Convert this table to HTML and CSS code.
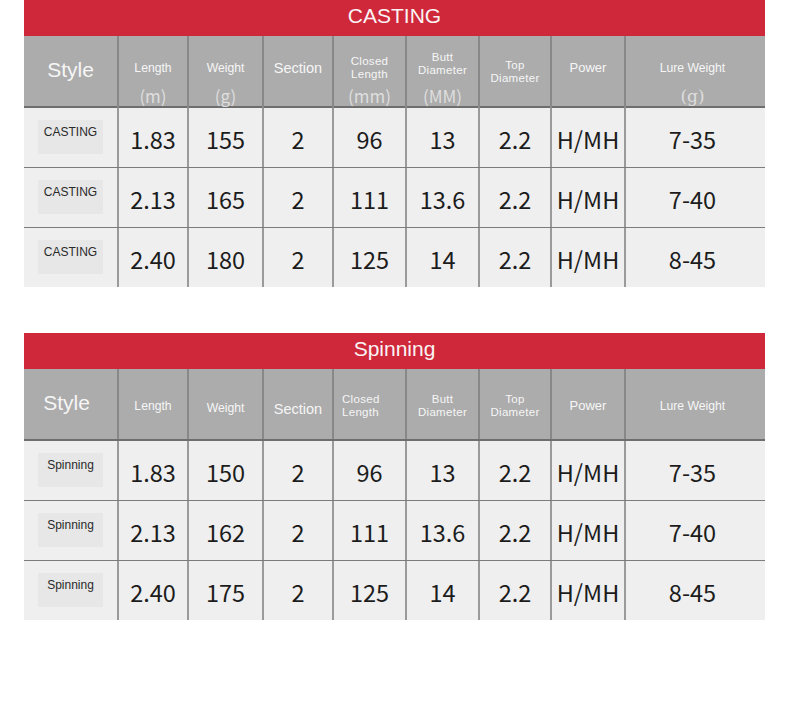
FILE: index.html
```html
<!DOCTYPE html>
<html>
<head>
<meta charset="utf-8">
<link rel="stylesheet" href="styles.css">
</head>
<body>
<div class="page">
  <section class="spec">
    <div class="title"><span class="title-text">CASTING</span></div>
    <div class="row head with-units">
      <div class="hc style-h"><span class="lbl-big">Style</span></div>
      <div class="hc"><span class="lbl">Length</span><span class="unit">(m)</span></div>
      <div class="hc"><span class="lbl">Weight</span><span class="unit">(g)</span></div>
      <div class="hc"><span class="lbl-mid">Section</span></div>
      <div class="hc"><span class="lbl two"><span class="ln">Closed</span><span class="ln">Length</span></span><span class="unit">(mm)</span></div>
      <div class="hc"><span class="lbl two up"><span class="ln">Butt</span><span class="ln">Diameter</span></span><span class="unit">(MM)</span></div>
      <div class="hc"><span class="lbl two down"><span class="ln">Top</span><span class="ln">Diameter</span></span></div>
      <div class="hc"><span class="lbl power">Power</span></div>
      <div class="hc"><span class="lbl">Lure Weight</span><span class="unit serif">(g)</span></div>
    </div>
    <div class="row data">
      <div class="dc style-d"><span class="tag">CASTING</span></div>
      <div class="dc">1.83</div><div class="dc">155</div><div class="dc">2</div><div class="dc">96</div>
      <div class="dc">13</div><div class="dc">2.2</div><div class="dc">H/MH</div><div class="dc">7-35</div>
    </div>
    <div class="row data">
      <div class="dc style-d"><span class="tag">CASTING</span></div>
      <div class="dc">2.13</div><div class="dc">165</div><div class="dc">2</div><div class="dc">111</div>
      <div class="dc">13.6</div><div class="dc">2.2</div><div class="dc">H/MH</div><div class="dc">7-40</div>
    </div>
    <div class="row data last">
      <div class="dc style-d"><span class="tag">CASTING</span></div>
      <div class="dc">2.40</div><div class="dc">180</div><div class="dc">2</div><div class="dc">125</div>
      <div class="dc">14</div><div class="dc">2.2</div><div class="dc">H/MH</div><div class="dc">8-45</div>
    </div>
  </section>

  <section class="spec">
    <div class="title"><span class="title-text">Spinning</span></div>
    <div class="row head plain">
      <div class="hc style-h2"><span class="lbl-big">Style</span></div>
      <div class="hc"><span class="lbl">Length</span></div>
      <div class="hc"><span class="lbl low">Weight</span></div>
      <div class="hc"><span class="lbl-mid low">Section</span></div>
      <div class="hc left"><span class="lbl two"><span class="ln">Closed</span><span class="ln">Length</span></span></div>
      <div class="hc"><span class="lbl two"><span class="ln">Butt</span><span class="ln">Diameter</span></span></div>
      <div class="hc"><span class="lbl two"><span class="ln">Top</span><span class="ln">Diameter</span></span></div>
      <div class="hc"><span class="lbl power">Power</span></div>
      <div class="hc"><span class="lbl">Lure Weight</span></div>
    </div>
    <div class="row data">
      <div class="dc style-d"><span class="tag">Spinning</span></div>
      <div class="dc">1.83</div><div class="dc">150</div><div class="dc">2</div><div class="dc">96</div>
      <div class="dc">13</div><div class="dc">2.2</div><div class="dc">H/MH</div><div class="dc">7-35</div>
    </div>
    <div class="row data">
      <div class="dc style-d"><span class="tag">Spinning</span></div>
      <div class="dc">2.13</div><div class="dc">162</div><div class="dc">2</div><div class="dc">111</div>
      <div class="dc">13.6</div><div class="dc">2.2</div><div class="dc">H/MH</div><div class="dc">7-40</div>
    </div>
    <div class="row data last">
      <div class="dc style-d"><span class="tag">Spinning</span></div>
      <div class="dc">2.40</div><div class="dc">175</div><div class="dc">2</div><div class="dc">125</div>
      <div class="dc">14</div><div class="dc">2.2</div><div class="dc">H/MH</div><div class="dc">8-45</div>
    </div>
  </section>
</div>
</body>
</html>
```
FILE: styles.css
```css
* { box-sizing: border-box; }
html, body { margin: 0; padding: 0; background: #ffffff; }
body { font-family: "Liberation Sans", Arial, sans-serif; }

.page {
  padding: 0 24px;
  width: 789px;
}
.spec { width: 741px; }
.spec + .spec { margin-top: 46px; }

.title {
  height: 36px;
  background: #ce283a;
  display: flex;
  align-items: center;
  justify-content: center;
  padding-bottom: 4px;
}
.title-text {
  color: #fbf3f4;
  font-size: 21px;
  line-height: 24px;
  padding: 0 6px;
}

.row {
  display: grid;
  grid-template-columns: 93px 70px 75px 70px 73px 73px 72px 74px 141px;
}
.head {
  height: 72px;
  background: #acacac;
  border-bottom: 2px solid #6e6e6e;
}
.data {
  height: 60px;
  background: #efefef;
  border-bottom: 1px solid #7c7c7c;
}
.data.last { height: 59px; border-bottom: none; }

.hc {
  border-left: 2px solid #888888;
  color: #f6f6f6;
  display: grid;
  justify-items: center;
  text-align: center;
}
.hc:first-child, .dc:first-child { border-left: none; }
.hc:last-child, .dc:last-child { padding-right: 6px; }

.with-units .hc {
  padding-top: 16px;
  grid-template-rows: 32px 24px;
  align-items: center;
}
.plain .hc {
  padding-top: 4px;
  align-items: center;
}

.lbl { font-size: 12.2px; line-height: 14px; }
.lbl.two { display: flex; flex-direction: column; align-items: center; }
.ln { display: block; font-size: 11.5px; letter-spacing: 0.3px; line-height: 13.4px; height: 13.4px; }
.lbl.up { margin-top: -8px; }
.lbl.down { margin-top: 8px; }
.lbl.low { margin-top: 3px; }
.lbl-mid.low { margin-top: 5px; }
.lbl.power { font-size: 13px; }
.lbl-mid { font-size: 14.5px; line-height: 16px; }
.lbl-big { font-size: 21px; line-height: 24px; }
.style-h .lbl-big { margin-top: 3px; }
.style-h2 .lbl-big { margin-right: 8px; margin-top: -6px; }
.hc.left { justify-items: start; padding-left: 8px; }
.hc.left .lbl.two { align-items: flex-start; }

.unit {
  font-family: "Noto Sans CJK SC", "Noto Sans", sans-serif;
  font-size: 17px;
  line-height: 22px;
  color: #dedede;
}
.unit.serif { font-family: "DejaVu Serif", "Liberation Serif", serif; font-size: 17px; }

.dc {
  border-left: 2px solid #9a9a9a;
  display: flex;
  align-items: center;
  justify-content: center;
  font-family: "Noto Sans CJK SC", "Noto Sans", sans-serif;
  font-size: 23.5px;
  color: #1c1c1c;
  padding-top: 2px;
}
.dc.style-d {
  align-items: flex-start;
  justify-content: flex-start;
  padding: 12px 0 0 14px;
}
.tag {
  width: 65px;
  height: 34px;
  background: #e7e7e7;
  font-family: "Liberation Sans", Arial, sans-serif;
  font-size: 12px;
  line-height: 14px;
  color: #2a2a2a;
  text-align: center;
  padding-top: 5px;
}
```
